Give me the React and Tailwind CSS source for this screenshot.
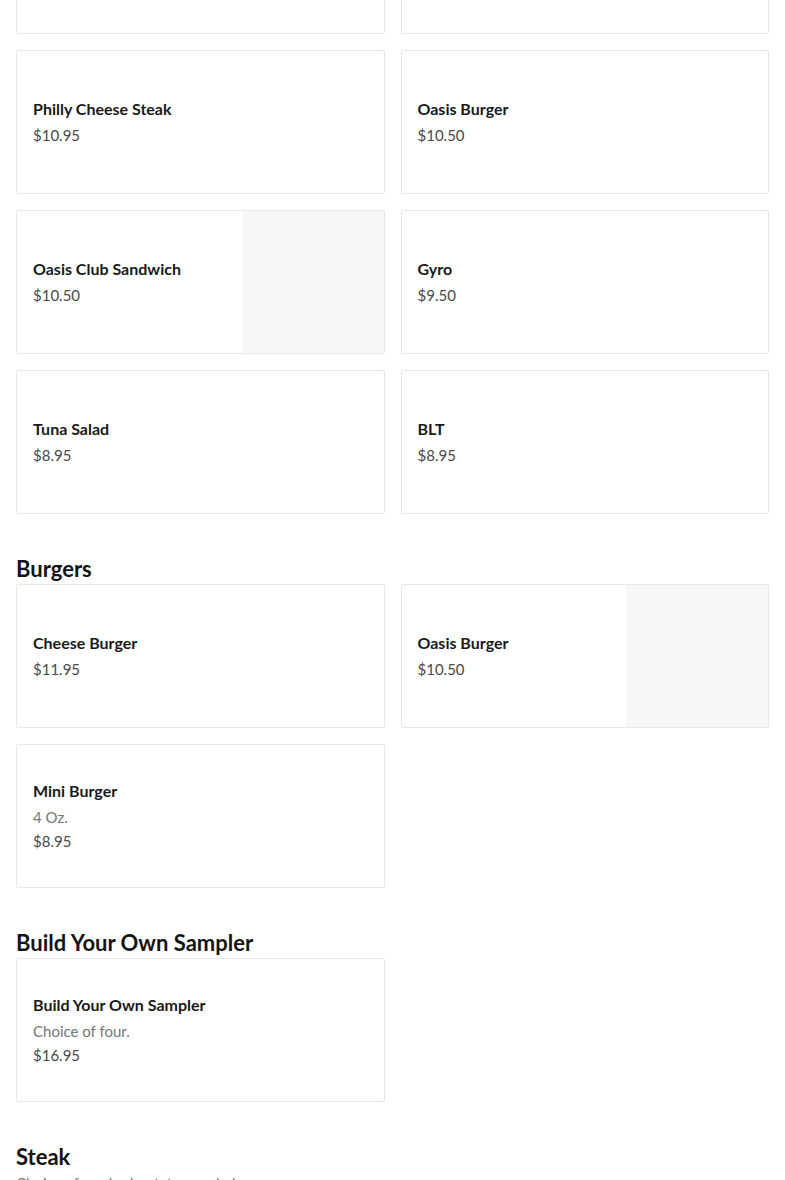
const sections = [
  {
    title: null,
    items: [
      { empty: true },
      { empty: true },
      { name: "Philly Cheese Steak", price: "$10.95" },
      { name: "Oasis Burger", price: "$10.50" },
      { name: "Oasis Club Sandwich", price: "$10.50", image: true },
      { name: "Gyro", price: "$9.50" },
      { name: "Tuna Salad", price: "$8.95" },
      { name: "BLT", price: "$8.95" },
    ],
  },
  {
    title: "Burgers",
    items: [
      { name: "Cheese Burger", price: "$11.95" },
      { name: "Oasis Burger", price: "$10.50", image: true },
      { name: "Mini Burger", desc: "4 Oz.", price: "$8.95" },
    ],
  },
  {
    title: "Build Your Own Sampler",
    items: [{ name: "Build Your Own Sampler", desc: "Choice of four.", price: "$16.95" }],
  },
  {
    title: "Steak",
    note: "Choice of mashed potato or salad.",
    items: [],
  },
];

function ItemCard({ item }) {
  return (
    <div className="flex h-[144px] overflow-hidden rounded-[2px] border border-[#e7e7e7] bg-white">
      {!item.empty && (
        <div className="flex flex-1 flex-col justify-center px-4">
          <h3 className="mb-[2px] text-[16px] font-bold leading-[24px] text-[#191919]">{item.name}</h3>
          {item.desc && <p className="text-[15px] leading-[24px] text-[#767676]">{item.desc}</p>}
          <p className="text-[15px] leading-[24px] text-[#494949]">{item.price}</p>
        </div>
      )}
      {item.image && <div className="w-[142px] shrink-0 bg-[#f7f7f7]" />}
    </div>
  );
}

export default function App() {
  return (
    <div className="h-[1180px] overflow-hidden bg-white font-['Lato',sans-serif]">
      <div className="mt-[-110px] px-4">
        {sections.map((section, i) => (
          <section key={i}>
            {section.title && (
              <h2 className="pt-[40px] text-[22px] font-bold leading-[30px] text-[#141414]">
                {section.title}
              </h2>
            )}
            {section.note && <p className="text-[15px] leading-[22px] text-[#767676]">{section.note}</p>}
            {section.items.length > 0 && (
              <div className="grid grid-cols-2 gap-4">
                {section.items.map((item, j) => (
                  <ItemCard key={j} item={item} />
                ))}
              </div>
            )}
          </section>
        ))}
      </div>
    </div>
  );
}
